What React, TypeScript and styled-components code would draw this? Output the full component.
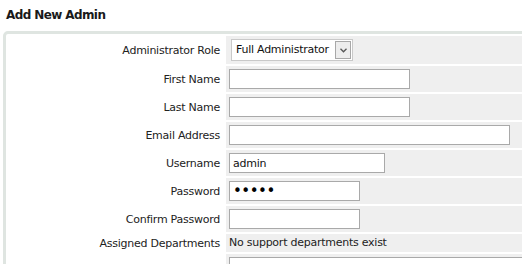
import React from "react"
import styled, { createGlobalStyle } from "styled-components"

const GlobalStyle = createGlobalStyle`
  html, body {
    margin: 0;
    padding: 0;
    overflow: hidden;
    background: #ffffff;
  }
  body {
    font-family: "DejaVu Sans", Tahoma, sans-serif;
    font-size: 11px;
    letter-spacing: -0.25px;
    color: #222222;
  }
`

const Title = styled.h1`
  margin: 0;
  padding: 8px 0 0 6px;
  font-size: 12px;
  line-height: 14px;
  font-weight: bold;
  letter-spacing: -0.6px;
  color: #1a1a1a;
`

const Panel = styled.div`
  margin: 9px 0 0 3px;
  width: 580px;
  border: 3px solid #dfe5e1;
  border-top-left-radius: 5px;
  padding: 2px;
  display: grid;
  grid-template-columns: 216px 1fr;
  gap: 2px;
  background: #ffffff;
`

const Label = styled.div`
  display: flex;
  align-items: center;
  justify-content: flex-end;
  padding-right: 4px;
  white-space: nowrap;
`

const Field = styled.div<{ $pad?: number }>`
  display: flex;
  align-items: center;
  background: #efefef;
  padding: ${(p) => p.$pad ?? 3}px 3px;
  line-height: 14px;
  white-space: nowrap;
`

const TextInput = styled.input<{ $w: number }>`
  box-sizing: border-box;
  width: ${(p) => p.$w}px;
  height: 20px;
  margin: 0;
  padding: 0 3px;
  border: 1px solid #a9a9a9;
  background: #ffffff;
  font-family: inherit;
  font-size: 11px;
  letter-spacing: -0.25px;
  color: #111111;
  outline: none;

  &[type="password"] {
    font-size: 15px;
    letter-spacing: -0.5px;
    color: #000000;
  }
`

const NotesBox = styled.div`
  box-sizing: border-box;
  width: 320px;
  height: 60px;
  border: 1px solid #a9a9a9;
  background: #ffffff;
`

const SelectBox = styled.div`
  box-sizing: border-box;
  display: flex;
  align-items: center;
  margin-left: 2px;
  width: 122px;
  height: 22px;
  padding: 0 1px 0 4px;
  border: 1px solid #c9c9c9;
  background: #ffffff;
  color: #111111;
`

const SelectText = styled.span`
  flex: 1;
`

const ArrowBox = styled.span`
  box-sizing: border-box;
  display: flex;
  align-items: center;
  justify-content: center;
  width: 16px;
  height: 18px;
  border: 1px solid #a8a8a8;
  background: #ededed;
`

function Chevron() {
  return (
    <svg width="7" height="5" viewBox="0 0 7 5">
      <path d="M0.5 0.8 L3.5 3.8 L6.5 0.8" fill="none" stroke="#555" strokeWidth="1.3" />
    </svg>
  )
}

const rows: { label: string; width: number; value?: string; type?: string }[] = [
  { label: "First Name", width: 181 },
  { label: "Last Name", width: 181 },
  { label: "Email Address", width: 281 },
  { label: "Username", width: 156, value: "admin" },
  { label: "Password", width: 131, value: "admin", type: "password" },
  { label: "Confirm Password", width: 131, type: "password" },
]

export default function App() {
  return (
    <>
      <GlobalStyle />
      <Title>Add New Admin</Title>
      <Panel>
        <Label>Administrator Role</Label>
        <Field>
          <SelectBox>
            <SelectText>Full Administrator</SelectText>
            <ArrowBox>
              <Chevron />
            </ArrowBox>
          </SelectBox>
        </Field>
        {rows.map((r) => (
          <React.Fragment key={r.label}>
            <Label>{r.label}</Label>
            <Field>
              <TextInput $w={r.width} type={r.type ?? "text"} defaultValue={r.value ?? ""} />
            </Field>
          </React.Fragment>
        ))}
        <Label>Assigned Departments</Label>
        <Field $pad={2}>No support departments exist</Field>
        <Label />
        <Field>
          <NotesBox />
        </Field>
      </Panel>
    </>
  )
}
